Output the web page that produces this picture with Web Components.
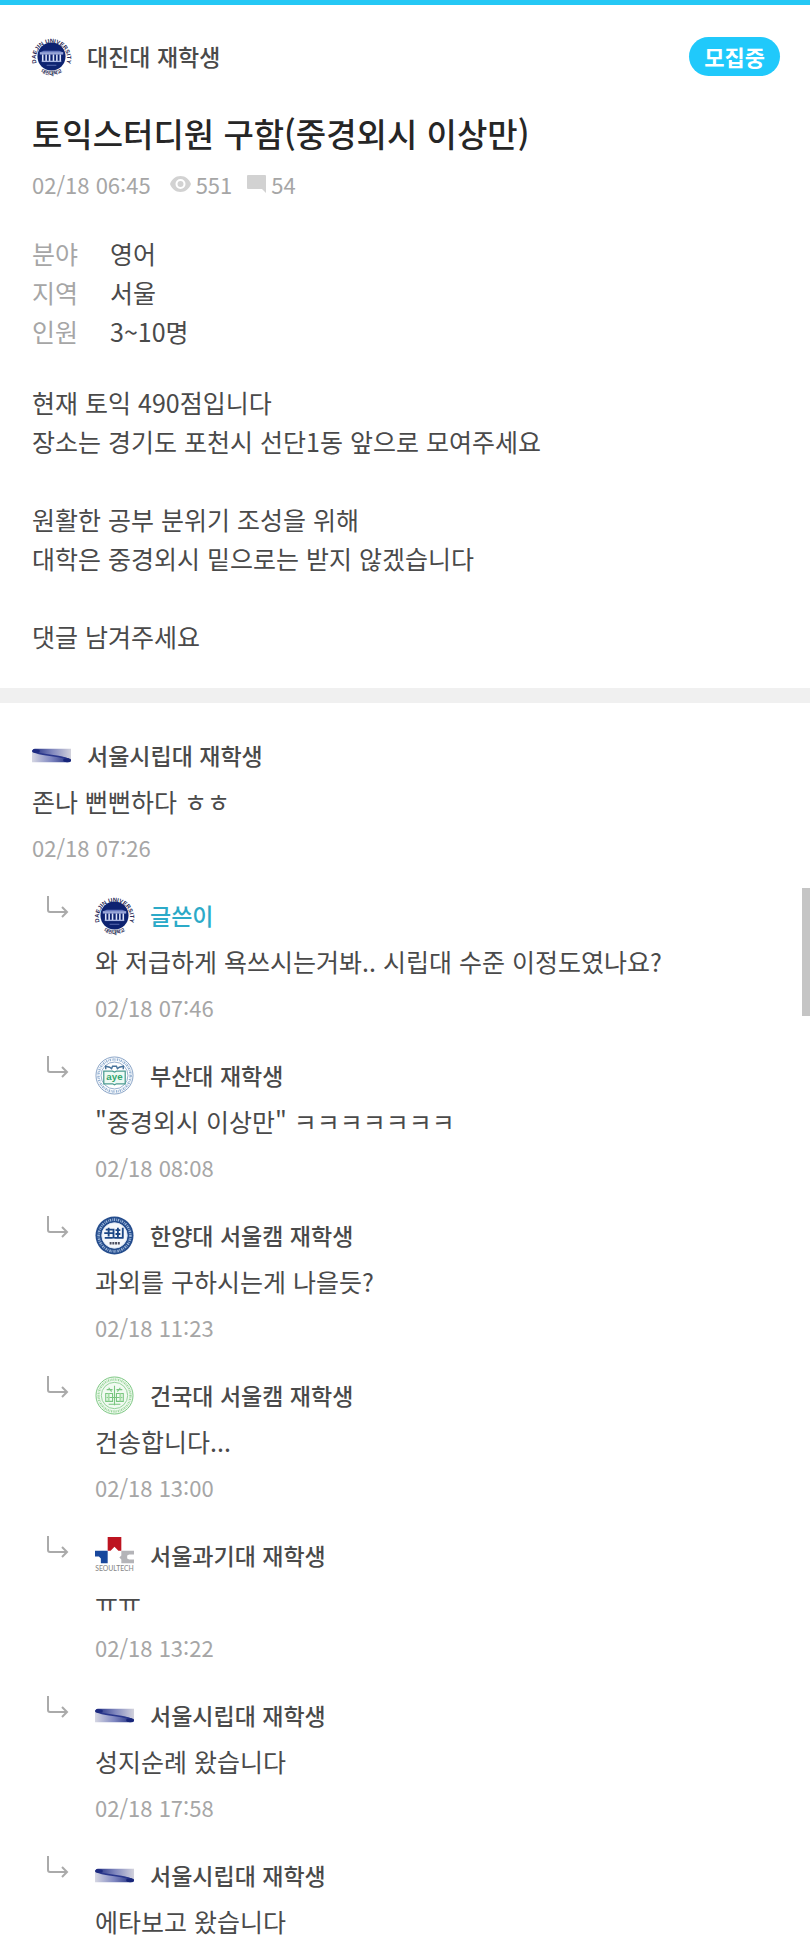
<!DOCTYPE html>
<html lang="ko">
<head>
<meta charset="utf-8">
<meta name="viewport" content="width=device-width, initial-scale=1">
<title>토익스터디원 구함</title>
<style>
html{background:#fff}
body{margin:0;font-family:"Noto Sans CJK KR","Noto Sans",sans-serif;color:#4a4a4a;overflow-x:hidden}
::-webkit-scrollbar{display:none}
</style>
</head>
<body>
<study-page>
  <study-post school="daejin" author="대진대 재학생" status="모집중" heading="토익스터디원 구함(중경외시 이상만)" time="02/18 06:45" views="551" comments="54">
    <info-row slot="info" label="분야">영어</info-row>
    <info-row slot="info" label="지역">서울</info-row>
    <info-row slot="info" label="인원">3~10명</info-row>
    <text-block>현재 토익 490점입니다<br>장소는 경기도 포천시 선단1동 앞으로 모여주세요</text-block>
    <text-block>원활한 공부 분위기 조성을 위해<br>대학은 중경외시 밑으로는 받지 않겠습니다</text-block>
    <text-block>댓글 남겨주세요</text-block>
  </study-post>
  <comment-item slot="comments" school="uos" author="서울시립대 재학생" time="02/18 07:26">존나 뻔뻔하다 ㅎㅎ</comment-item>
  <comment-item slot="comments" reply owner school="daejin" author="글쓴이" time="02/18 07:46">와 저급하게 욕쓰시는거봐.. 시립대 수준 이정도였나요?</comment-item>
  <comment-item slot="comments" reply school="pusan" author="부산대 재학생" time="02/18 08:08">"중경외시 이상만" ㅋㅋㅋㅋㅋㅋㅋ</comment-item>
  <comment-item slot="comments" reply school="hanyang" author="한양대 서울캠 재학생" time="02/18 11:23">과외를 구하시는게 나을듯?</comment-item>
  <comment-item slot="comments" reply school="konkuk" author="건국대 서울캠 재학생" time="02/18 13:00">건송합니다...</comment-item>
  <comment-item slot="comments" reply school="seoultech" author="서울과기대 재학생" time="02/18 13:22">ㅠㅠ</comment-item>
  <comment-item slot="comments" reply school="uos" author="서울시립대 재학생" time="02/18 17:58">성지순례 왔습니다</comment-item>
  <comment-item slot="comments" reply school="uos" author="서울시립대 재학생">에타보고 왔습니다</comment-item>
</study-page>
<script>
const LOGOS = {
  daejin: `<svg viewBox="0 0 40 40"><defs><path id="t" d="M5 27.500A16 16 0 1 1 35 27.500"/><path id="b" d="M5 32A19.500 19.500 0 0 0 35 32"/></defs>
    <circle cx="20" cy="20" r="14.400" fill="#0e2371"/>
    <g font-family="Liberation Sans" font-weight="700" fill="#1b2350" text-anchor="middle">
      <text font-size="6"><textPath href="#t" startOffset="50%">DAEJIN UNIVERSITY</textPath></text>
      <text font-size="5" font-family="Noto Sans CJK KR"><textPath href="#b" startOffset="50%">대진대학교</textPath></text>
    </g>
    <path d="M8 15.500h24v2.500H8z" fill="#9aa7da"/><path d="M9 15.500l3-1.500h16l3 1.500" fill="#6576bd"/>
    <path d="M11 18v7M14.500 18v7M18 18v7M22 18v7M25.500 18v7M29 18v7" stroke="#dce2f7" stroke-width="1.600"/>
    <path d="M10 25h20" stroke="#a8b4e1" stroke-width="1.400"/><path d="M15 29h10" stroke="#5b6bb0"/></svg>`,
  uos: `<svg viewBox="0 0 40 40"><defs>
    <linearGradient id="u1"><stop stop-color="#1d2a80"/><stop offset=".5" stop-color="#7f86bd"/><stop offset="1" stop-color="#d2d2dc"/></linearGradient>
    <linearGradient id="u2"><stop stop-color="#d6d7e3"/><stop offset=".5" stop-color="#7e86c0"/><stop offset="1" stop-color="#17257a"/></linearGradient></defs>
    <path d="M3 13H40V26Q32 22 16 20Q2 18 1 16Q0 13 3 13Z" fill="url(#u1)"/>
    <path d="M0 15Q2 18 20 20Q40 22 40 25Q40 27 36 27H0Z" fill="url(#u2)"/>
    <path d="M1 15.500Q4 18 20 20Q36 22 39 25" fill="none" stroke="#2a378c" stroke-width="1.400"/>
    <ellipse cx="4" cy="15.500" rx="4" ry="2" fill="#1d2a80"/><ellipse cx="36" cy="24.800" rx="4" ry="2" fill="#17257a"/></svg>`,
  pusan: `<svg viewBox="0 0 40 40"><g fill="none" stroke="#6689b5">
    <circle cx="20" cy="20" r="19" stroke-width=".8"/><circle cx="20" cy="20" r="16.500" stroke="#93b0d2" stroke-width="2.600" stroke-dasharray="1.400 .9 .7 .8"/><circle cx="20" cy="20" r="13.800" stroke-width=".7"/>
    <path d="M11 13.500v-3l4 1 2 1.500 1-2.500h4l1 2.500 2-1.500 4-1v3" stroke="#49739b" stroke-width="1.500"/></g>
    <path d="M9 15.500h9l2 1 2-1h9v13H22l-2 1-2-1H9z" fill="#eefaf4" stroke="#4c9c91" stroke-width="1.300"/>
    <text x="20" y="25" text-anchor="middle" font-size="10" font-weight="700" fill="#32a66d" font-family="Liberation Sans">aye</text></svg>`,
  hanyang: `<svg viewBox="0 0 40 40"><circle cx="20" cy="20" r="19.500" fill="#254d8d"/>
    <circle cx="20" cy="20" r="16.300" fill="none" stroke="#9bb5d9" stroke-width="2.600" stroke-dasharray="1.400 1.200 .8 .8"/>
    <circle cx="20" cy="20" r="13" fill="#f4f7fb" stroke="#dce6f3"/>
    <path d="M11 14h7M9.500 17.500h9M14 12v9M19 13v10M10 22.500h8M21 14.500h5M23.500 12v10M21 18.500h5M28.500 12v11M20 22.500h9" stroke="#1b4685" stroke-width="1.900" fill="none"/>
    <path d="M15 28h11" stroke="#4a4d5e" stroke-width="2.500" stroke-dasharray="2 .8"/></svg>`,
  konkuk: `<svg viewBox="0 0 40 40"><g fill="none" stroke="#79c57f"><circle cx="20" cy="20" r="19" fill="#f1faf1"/>
    <circle cx="20" cy="20" r="16.400" stroke="#9bd69c" stroke-width="2.400" stroke-dasharray="1.200 .8 .7 .8"/><circle cx="20" cy="20" r="13.500" stroke-width=".8"/>
    <path d="M12 14h6M22 14h6M20 10v20M11 18h7v8h-7zM22 18h7v8h-7zM12 22h16M14 29h12M14 12l3 4M26 12l-3 4" stroke-width="1.100"/><path d="M14 18v8M26 18v8" stroke="#a5dda6" stroke-width="2"/></g></svg>`,
  seoultech: `<svg viewBox="0 0 40 40"><path d="M13 1h14v14h-3l-4-4-4 4h-3z" fill="#bd1420"/>
    <path d="M0 15h13v13H6v-5l-2-2H0z" fill="#18479d"/><path d="M27 15h13v4h-5l-2 1v3l2 1h5v4H27v-4l-2-2 2-2z" fill="#b4b4b8"/>
    <text x="20" y="36" text-anchor="middle" font-size="7" fill="#888" font-family="Lato">SEOULTECH</text></svg>`
};
const define = (name, render) => customElements.define(name, class extends HTMLElement {
  connectedCallback() {
    if (this.shadowRoot) return;
    this.attachShadow({mode: "open"}).innerHTML = render(k => this.getAttribute(k), this);
  }
});

define("school-logo", a => `<style>:host{display:block;flex:none;width:39px;height:39px}svg{display:block;width:100%;height:100%;overflow:visible}</style>${LOGOS[a("school")]}`);

define("author-line", a => `<style>
:host{display:flex;align-items:center;gap:16px;font-size:23px;line-height:34px;font-weight:500;color:#4a4a4a}
:host([owner]){color:#2caac8}
span{padding-bottom:2px}
</style><school-logo school="${a("school")}"></school-logo><span><slot></slot></span>`);

define("info-row", a => `<style>
:host{display:block;font-size:25px;line-height:39px}
dl{display:flex;gap:32px;margin:0}dt{color:#a6a6a6}dd{margin:0}
</style><dl><dt>${a("label")}</dt><dd><slot></slot></dd></dl>`);

define("text-block", () => `<style>:host{display:block;font-size:25px;line-height:39px}p{margin:0}</style><p><slot></slot></p>`);

define("study-post", a => `<style>
:host{display:block;padding:32px 30px 32px 32px;border-top:5px solid #25c8f5}
header{display:flex;justify-content:space-between;align-items:center}
.status{height:39px;padding:0 15px;border-radius:20px;background:#20c9fb;color:#fff;font-size:22px;line-height:38px;font-weight:700}
h1{margin:32px 0 0;font-size:33px;line-height:50px;font-weight:500;color:#262626}
.meta{display:flex;align-items:center;margin-top:8px;font-size:22px;line-height:36px;color:#a6a6a6}
.meta svg{display:block;margin-right:5px}
.eye{margin-left:19px}.bubble{margin-left:15px}
.meta span{display:flex;align-items:center}
.info{margin-top:32px}
.body{display:grid;gap:39px;margin-top:32px}
</style>
<header><author-line school="${a("school")}">${a("author")}</author-line><span class="status">${a("status")}</span></header>
<h1>${a("heading")}</h1>
<div class="meta"><time>${a("time")}</time>
<span class="eye"><svg width="21" height="16" viewBox="0 0 21 16"><path fill="#d2d2d2" fill-rule="evenodd" d="M10.500 0C5.500 0 1.700 3.300 0 8c1.700 4.700 5.500 8 10.500 8S19.300 12.700 21 8C19.300 3.300 15.500 0 10.500 0zm0 13a5 5 0 1 1 0-10 5 5 0 0 1 0 10zm0-2a3 3 0 1 0 0-6 3 3 0 0 0 0 6z"/></svg>${a("views")}</span>
<span class="bubble"><svg width="19" height="18" viewBox="0 0 19 18"><path fill="#d2d2d2" d="M1 0h17q1 0 1 1v17l-4-4H1q-1 0-1-1V1q0-1 1-1z"/></svg>${a("comments")}</span></div>
<div class="info"><slot name="info"></slot></div>
<div class="body"><slot></slot></div>`);

define("comment-item", (a, el) => `<style>
:host{display:flex;padding:0 32px 32px}
:host([reply]){padding-left:47px}
.arrow{flex:none;display:block;width:22px;height:22px;margin-right:26px}
.content{min-width:0;flex:1}
p{margin:7px 0 0;font-size:25px;line-height:39px}
time{display:block;margin-top:9px;font-size:22px;line-height:34px;color:#a6a6a6}
</style>
${el.hasAttribute("reply") ? `<svg class="arrow" viewBox="0 0 22 22" fill="none" stroke="#aaa" stroke-width="2"><path d="M1 0v14q0 2 2 2h17M15 11l5 5-5 5"/></svg>` : ""}
<div class="content"><author-line school="${a("school")}" ${el.hasAttribute("owner") ? "owner" : ""}>${a("author")}</author-line>
<p><slot></slot></p>${a("time") ? `<time>${a("time")}</time>` : ""}</div>`);

define("study-page", () => `<style>
:host{display:block;position:relative}
section{border-top:15px solid #f0f0f0;padding-top:33px}
.thumb{position:absolute;right:0;top:888px;width:8px;height:128px;background:#c5c5c5}
</style>
<main><slot></slot><section aria-label="댓글"><slot name="comments"></slot></section></main>
<div class="thumb" aria-hidden="true"></div>`);
</script>
</body>
</html>
